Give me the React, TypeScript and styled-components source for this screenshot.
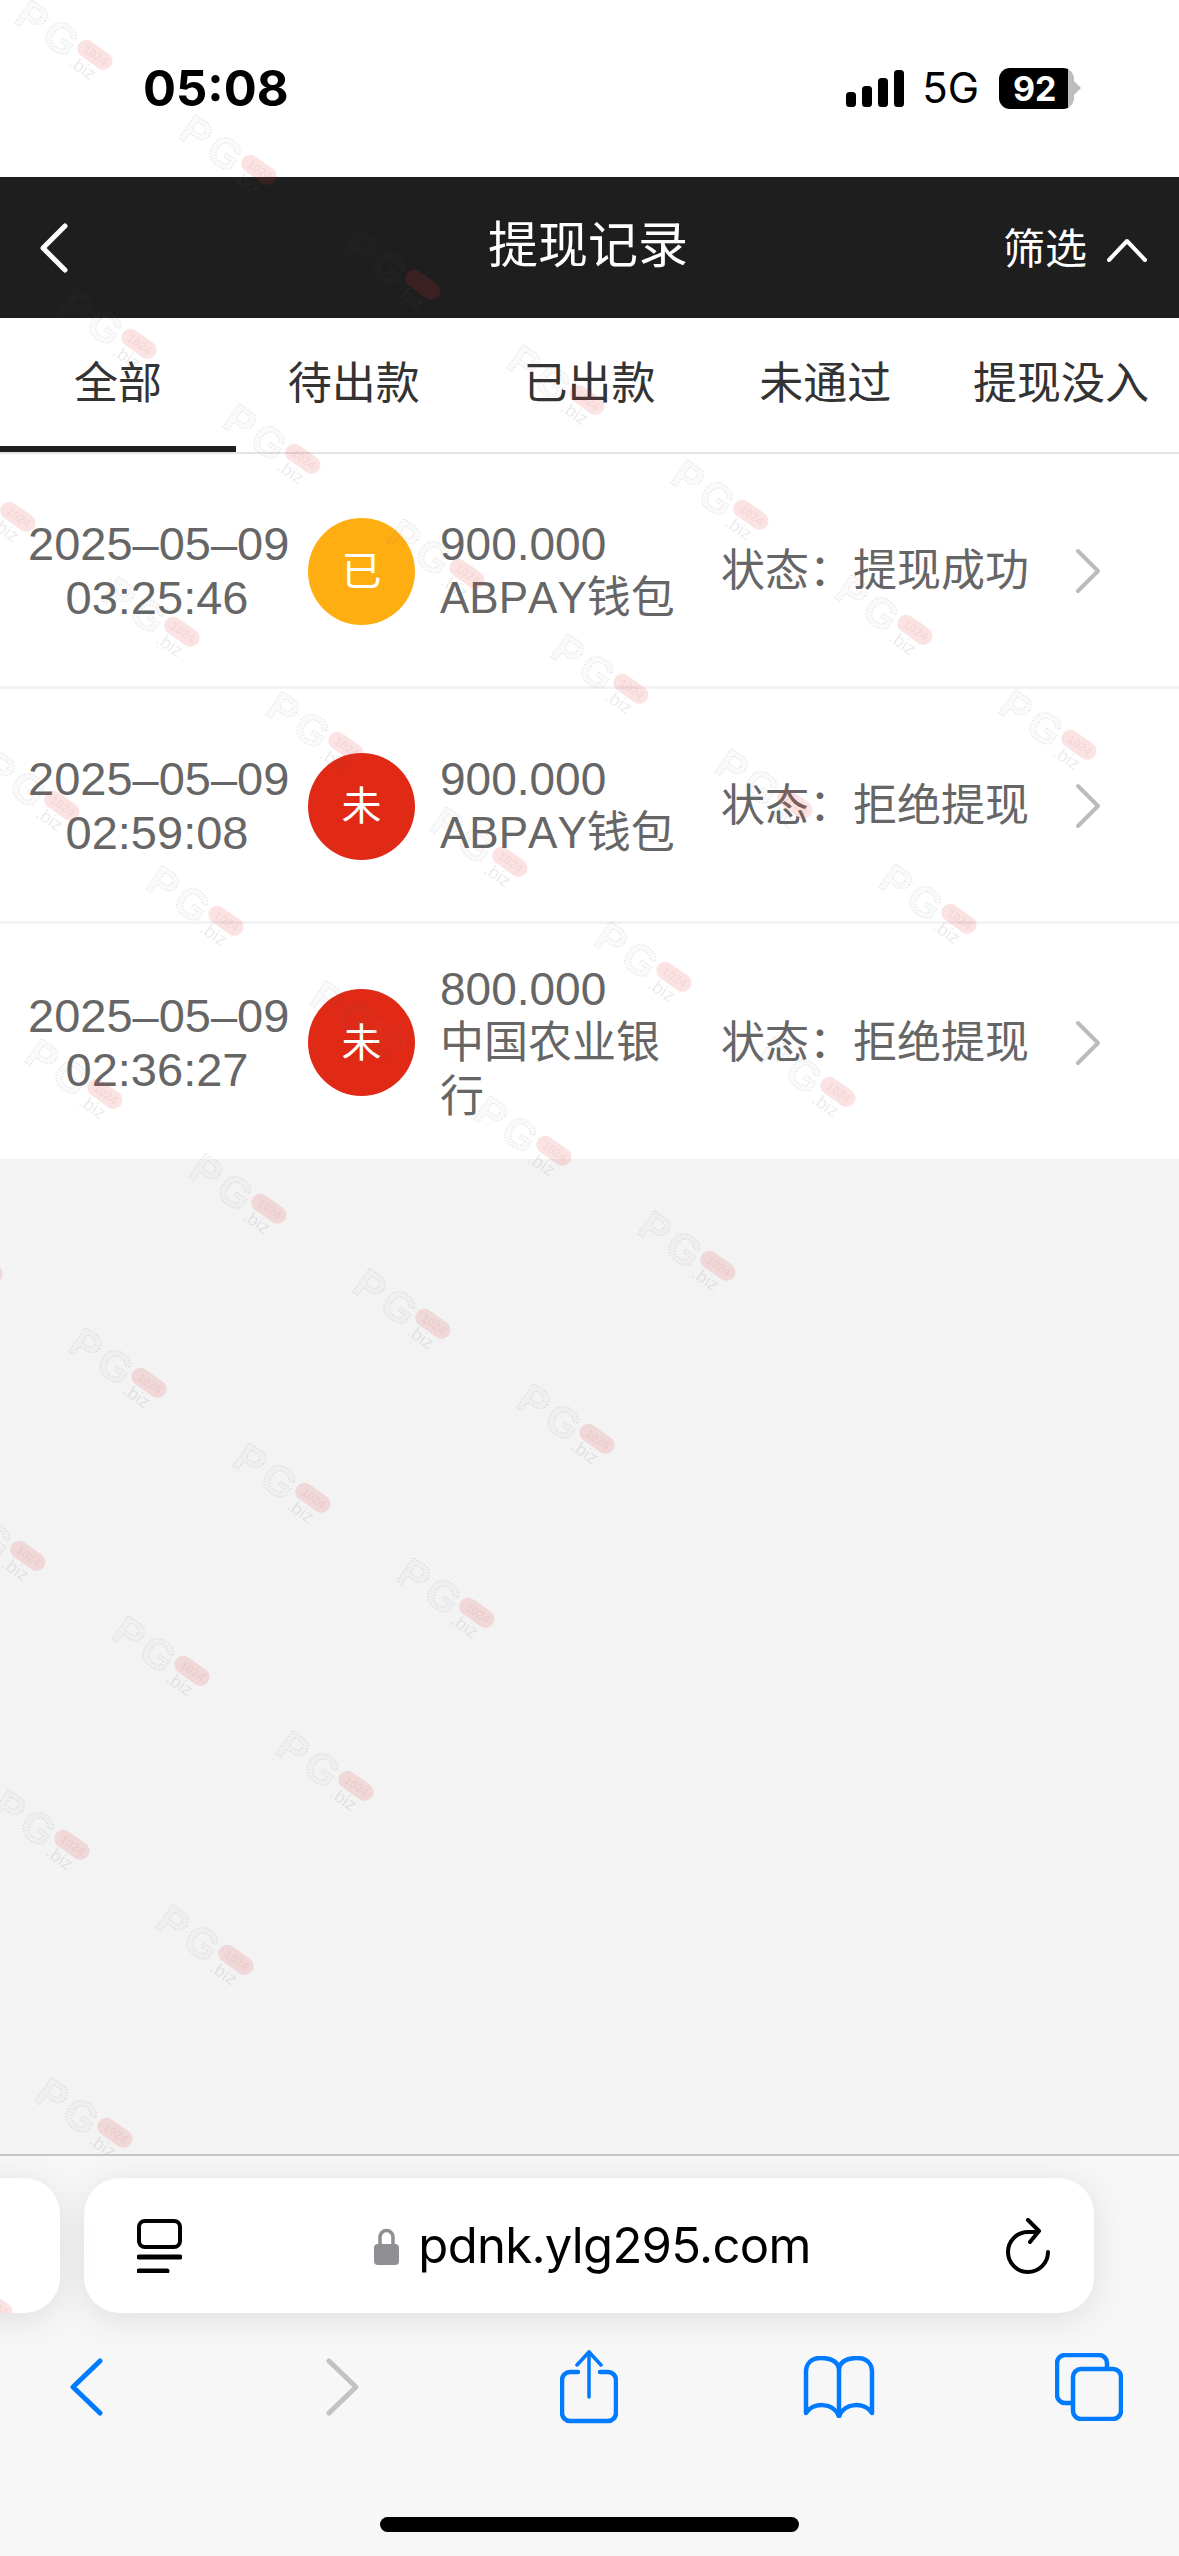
import React from "react";
import styled, { createGlobalStyle } from "styled-components";

const GlobalStyle = createGlobalStyle`
  html, body {
    margin: 0;
    padding: 0;
    background: #f3f3f3;
  }
  * {
    box-sizing: border-box;
  }
`;

const Page = styled.div`
  position: relative;
  width: 1179px;
  height: 2556px;
  overflow: hidden;
  display: flex;
  flex-direction: column;
  background: #f3f3f3;
  font-family: "Liberation Sans", "Noto Sans CJK SC", sans-serif;
`;

const StatusBar = styled.div`
  height: 177px;
  flex: none;
  background: #fff;
  display: flex;
  align-items: center;
  justify-content: space-between;
  padding: 0 98px 1px 143px;
  font-family: Inter, sans-serif;
  color: #000;
`;

const Clock = styled.div`
  font-size: 49px;
  font-weight: 700;
  line-height: 1;
`;

const StatusRight = styled.div`
  display: flex;
  align-items: center;
`;

const NetLabel = styled.div`
  font-size: 42px;
  line-height: 1;
  margin: 0 20px 0 18px;
`;

const Battery = styled.div`
  width: 75px;
  height: 41px;
  border-radius: 11px;
  background: linear-gradient(to right, #000 69px, #bdbdbd 69px);
  color: #fff;
  font-size: 34px;
  font-weight: 700;
  line-height: 41px;
  padding-left: 14px;
`;

const BatteryCap = styled.div`
  width: 0;
  height: 0;
  border-left: 7px solid #bdbdbd;
  border-top: 7px solid transparent;
  border-bottom: 7px solid transparent;
`;

const Header = styled.div`
  height: 141px;
  flex: none;
  background: #1e1e1e;
  color: #fff;
  display: grid;
  grid-template-columns: 1fr auto 1fr;
  align-items: center;
  padding: 0 32px 0 39px;
`;

const Title = styled.div`
  font-size: 50px;
  line-height: 1;
  margin-bottom: 4px;
  margin-right: 10px;
`;

const Filter = styled.div`
  display: flex;
  align-items: center;
  justify-content: flex-end;
  gap: 20px;
  font-size: 42px;
  line-height: 1;
  margin-top: 5px;
`;

const TabBar = styled.div`
  height: 136px;
  flex: none;
  background: #fff;
  display: grid;
  grid-template-columns: repeat(5, 1fr);
  border-bottom: 2px solid #e4e4e4;
`;

const Tab = styled.div<{ $active?: boolean }>`
  height: 134px;
  display: flex;
  align-items: center;
  justify-content: center;
  font-size: 44px;
  color: #333;
  white-space: nowrap;
  padding-bottom: 5px;
  border-bottom: 6px solid ${(p) => (p.$active ? "#1e1e1e" : "transparent")};
`;

const List = styled.div`
  flex: none;
`;

const Row = styled.div`
  height: 235px;
  background: #fff;
  display: flex;
  align-items: center;
  padding: 2px 0 0 28px;
  border-bottom: 3px solid #f3f3f3;
  color: #666;
  font-size: 44px;
  line-height: 54px;

  &:last-child {
    border-bottom: none;
  }
`;

const DateCell = styled.div`
  width: 258px;
  flex: none;
  font-size: 47px;
  text-align: center;
  white-space: nowrap;
`;

const Badge = styled.div<{ $color: string }>`
  width: 107px;
  height: 107px;
  flex: none;
  margin: 0 25px 0 22px;
  border-radius: 50%;
  background: ${(p) => p.$color};
  color: #fff;
  font-size: 40px;
  display: flex;
  align-items: center;
  justify-content: center;
`;

const Info = styled.div`
  width: 236px;
  flex: none;
  margin-right: 45px;
  font-kerning: none;
`;

const Amount = styled.div`
  font-size: 46px;
`;

const Status = styled.div`
  width: 305px;
  flex: none;
  margin-right: 49px;
  white-space: nowrap;
`;

const Filler = styled.div`
  flex: 1;
`;

const Chrome = styled.div`
  position: relative;
  z-index: 2;
  height: 402px;
  flex: none;
  background: #f7f7f7;
  border-top: 2px solid #c6c6c6;
  padding-top: 22px;
`;

const CardRow = styled.div`
  display: flex;
  gap: 24px;
  margin-left: -100px;
`;

const Card = styled.div`
  height: 135px;
  background: #fff;
  border-radius: 36px;
  box-shadow: 0 6px 36px rgba(0, 0, 0, 0.1);
`;

const SideCard = styled(Card)`
  position: relative;
  overflow: hidden;
  width: 160px;
  flex: none;
`;

const UrlCard = styled(Card)`
  width: 1010px;
  flex: none;
  display: flex;
  align-items: center;
  justify-content: space-between;
  padding: 0 44px 0 53px;
`;

const UrlCenter = styled.div`
  display: flex;
  align-items: center;
  gap: 19px;
  margin-right: 3px;
`;

const UrlText = styled.div`
  font-family: Inter, sans-serif;
  font-size: 49px;
  letter-spacing: -0.7px;
  line-height: 1;
  color: #000;
`;

const Toolbar = styled.div`
  display: grid;
  grid-template-columns: 172px 342px 150px 350px 150px;
  justify-items: center;
  align-items: center;
  height: 72px;
  margin-top: 37px;
`;

const HomeBar = styled.div`
  width: 419px;
  height: 15px;
  margin: 95px auto 0;
  border-radius: 8px;
  background: #000;
`;

const Icon = styled.svg`
  display: block;
  flex: none;
  fill: none;
  stroke-linecap: round;
  stroke-linejoin: round;
`;

const MarkLayer = styled.div`
  position: absolute;
  inset: 0;
  z-index: 1;
  pointer-events: none;
`;

const Mark = styled.svg<{ $x: number; $y: number }>`
  position: absolute;
  left: ${(p) => p.$x - 60}px;
  top: ${(p) => p.$y - 50}px;
  width: 120px;
  height: 100px;
  overflow: visible;
`;

const MarkText = styled.text`
  font-family: "Liberation Sans", sans-serif;
  font-weight: 700;
  font-size: 42px;
  letter-spacing: 5px;
  fill: rgba(120, 120, 120, 0.03);
  stroke: rgba(90, 90, 90, 0.17);
  stroke-width: 1.3;
  stroke-dasharray: 1.5 1.5;
`;

const MarkDomain = styled.text`
  font-family: "Liberation Sans", sans-serif;
  font-size: 18px;
  fill: rgba(90, 90, 90, 0.13);
`;

const MarkPillLabel = styled.text`
  font-family: "Liberation Sans", sans-serif;
  font-weight: 700;
  font-size: 12px;
  fill: rgba(170, 40, 40, 0.08);
`;

// one faint "PG.biz" stamp, x/y is its middle point
function Watermark({ x, y }: { x: number; y: number }) {
  return (
    <Mark $x={x} $y={y} viewBox="0 0 120 100">
      <g transform="rotate(35 60 50)">
        <MarkText x="14" y="67">PG</MarkText>
        <rect x="81" y="38" width="39" height="18" rx="9" fill="rgba(226,60,60,0.14)" />
        <MarkPillLabel x="88" y="51">1024</MarkPillLabel>
        <MarkDomain x="84" y="71">.biz</MarkDomain>
      </g>
    </Mark>
  );
}

const marks: { x: number; y: number }[] = [];
for (let i = 0; i <= 6; i++) {
  for (let j = 0; j <= 8; j++) {
    marks.push({ x: 60 + i * 164 - j * 120.5, y: 34 + i * 115 + j * 173.5 });
  }
}

const rows = [
  { date: "2025–05–09", time: "03:25:46", badge: "已", color: "#ffae12", amount: "900.000", bank: "ABPAY钱包", status: "状态：提现成功" },
  { date: "2025–05–09", time: "02:59:08", badge: "未", color: "#e02a16", amount: "900.000", bank: "ABPAY钱包", status: "状态：拒绝提现" },
  { date: "2025–05–09", time: "02:36:27", badge: "未", color: "#e02a16", amount: "800.000", bank: "中国农业银行", status: "状态：拒绝提现" },
];

const tabs = ["全部", "待出款", "已出款", "未通过", "提现没入"];

export default function App() {
  return (
    <Page>
      <GlobalStyle />
      <StatusBar>
        <Clock>05:08</Clock>
        <StatusRight>
          <Icon width="58" height="37" viewBox="0 0 58 37">
            <rect x="0" y="22" width="10" height="15" rx="3.5" fill="#000" />
            <rect x="16" y="16" width="10" height="21" rx="3.5" fill="#000" />
            <rect x="32" y="8" width="10" height="29" rx="3.5" fill="#000" />
            <rect x="48" y="0" width="10" height="37" rx="3.5" fill="#000" />
          </Icon>
          <NetLabel>5G</NetLabel>
          <Battery>92</Battery>
          <BatteryCap />
        </StatusRight>
      </StatusBar>

      <Header>
        <Icon width="30" height="50" viewBox="0 0 30 50" stroke="#fff" strokeWidth="5">
          <path d="M26 3 L4 25 L26 47" />
        </Icon>
        <Title>提现记录</Title>
        <Filter>
          筛选
          <Icon width="40" height="24" viewBox="0 0 40 24" stroke="#fff" strokeWidth="4">
            <path d="M2 22 L20 3 L38 22" />
          </Icon>
        </Filter>
      </Header>

      <TabBar>
        {tabs.map((t, i) => (
          <Tab key={t} $active={i === 0}>{t}</Tab>
        ))}
      </TabBar>

      <List>
        {rows.map((r) => (
          <Row key={r.time}>
            <DateCell>
              {r.date}
              <br />
              {r.time}
            </DateCell>
            <Badge $color={r.color}>{r.badge}</Badge>
            <Info>
              <Amount>{r.amount}</Amount>
              {r.bank}
            </Info>
            <Status>{r.status}</Status>
            <Icon width="26" height="46" viewBox="0 0 26 46" stroke="#bbb" strokeWidth="4">
              <path d="M3 3 L23 23 L3 43" />
            </Icon>
          </Row>
        ))}
      </List>
      <Filler />

      <Chrome>
        <CardRow>
          <SideCard>
            <Watermark x={60} y={107} />
          </SideCard>
          <UrlCard>
            <Icon width="45" height="54" viewBox="0 0 45 54" stroke="#000" strokeWidth="4">
              <rect x="2" y="2" width="41" height="26" rx="6" />
              <path d="M2 38 H43" strokeWidth="5" />
              <path d="M2 52 H30" strokeWidth="5" />
            </Icon>
            <UrlCenter>
              <Icon width="25" height="38" viewBox="0 0 25 38">
                <path d="M6 18 V10 a6.5 6.5 0 0 1 13 0 V18" stroke="#8e8e93" strokeWidth="3.5" />
                <rect x="0" y="17" width="25" height="21" rx="4" fill="#8e8e93" />
              </Icon>
              <UrlText>pdnk.ylg295.com</UrlText>
            </UrlCenter>
            <Icon width="44" height="56" viewBox="0 0 44 56" stroke="#000" strokeWidth="4">
              <path d="M42 34 A20 20 0 1 1 22 14 H30" />
              <path d="M22 2 L33 13 L24 24" />
            </Icon>
          </UrlCard>
        </CardRow>

        <Toolbar>
          <Icon width="34" height="58" viewBox="0 0 34 58" stroke="#007aff" strokeWidth="5">
            <path d="M31 3 L4 29 L31 55" />
          </Icon>
          <Icon width="34" height="58" viewBox="0 0 34 58" stroke="#c2c2c2" strokeWidth="5">
            <path d="M3 3 L30 29 L3 55" />
          </Icon>
          <Icon width="58" height="74" viewBox="0 0 58 74" stroke="#007aff" strokeWidth="4.5">
            <path d="M18 22 H10 a8 8 0 0 0 -8 8 V63 a8 8 0 0 0 8 8 H48 a8 8 0 0 0 8 -8 V30 a8 8 0 0 0 -8 -8 H40" />
            <path d="M29 47 V2" strokeWidth="3.5" />
            <path d="M17 15 L29 2 L41 15" strokeWidth="3.5" />
          </Icon>
          <Icon width="72" height="62" viewBox="0 0 72 62" stroke="#007aff" strokeWidth="4.5">
            <path d="M36 14 C36 6 28 2 18 2 C8 2 3 8 3 16 V57 C10 46 30 46 36 60 C42 46 62 46 69 57 V16 C69 8 64 2 54 2 C44 2 36 6 36 14 Z" />
            <path d="M36 14 V60" />
          </Icon>
          <Icon width="68" height="68" viewBox="0 0 68 68" stroke="#007aff" strokeWidth="4.5">
            <path d="M52 15 V10 a8 8 0 0 0 -8 -8 H10 a8 8 0 0 0 -8 8 V42 a8 8 0 0 0 8 8 H17" />
            <rect x="18" y="16" width="48" height="50" rx="8" />
          </Icon>
        </Toolbar>
        <HomeBar />
      </Chrome>

      <MarkLayer>
        {marks
          .filter((m) => m.y < 2180)
          .map((m) => (
            <Watermark key={`${m.x}-${m.y}`} x={m.x} y={m.y} />
          ))}
      </MarkLayer>
    </Page>
  );
}
